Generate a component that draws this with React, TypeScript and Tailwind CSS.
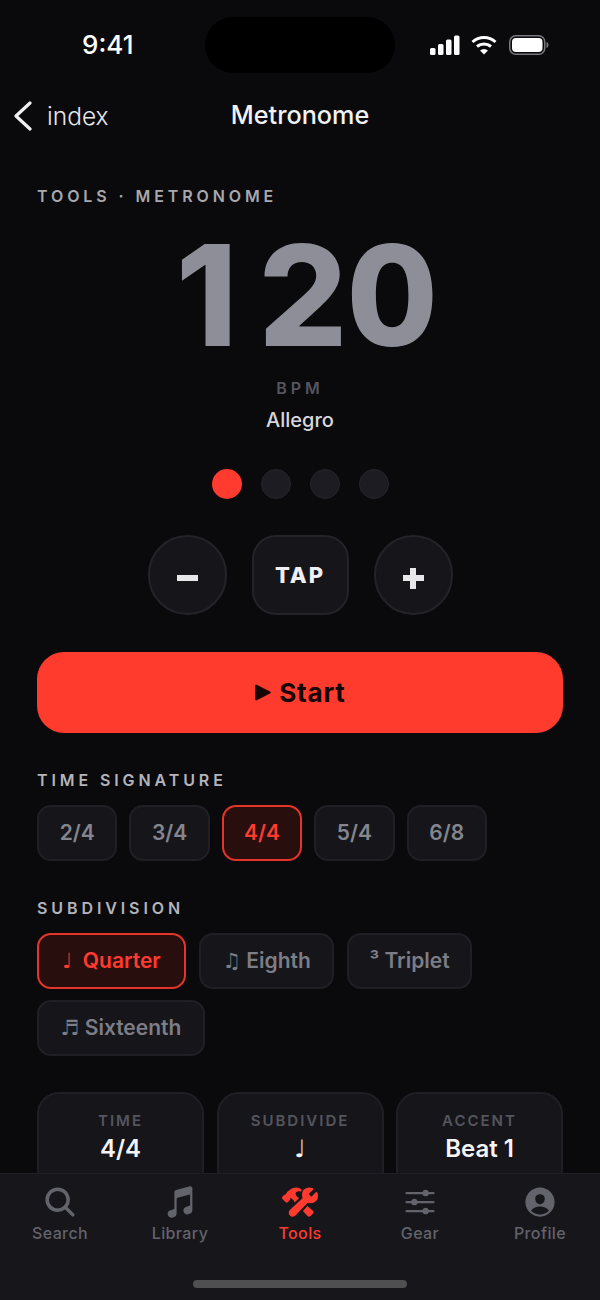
import { IoConstruct, IoMusicalNotes, IoOptions, IoPersonCircle, IoSearch } from "react-icons/io5";

const timeSignatures = ["2/4", "3/4", "4/4", "5/4", "6/8"];
const subdivisions = [
  { label: "♩  Quarter", width: "w-[149px]", active: true },
  { label: "♫ Eighth", width: "w-[135px]", active: false },
  { label: "³ Triplet", width: "w-[125px]", active: false },
  { label: "♬ Sixteenth", width: "w-[168px]", active: false },
];
const stats = [
  { label: "TIME", value: "4/4" },
  { label: "SUBDIVIDE", value: "♩" },
  { label: "ACCENT", value: "Beat 1" },
];
const tabs = [
  { label: "Search", icon: IoSearch, active: false },
  { label: "Library", icon: IoMusicalNotes, active: false },
  { label: "Tools", icon: IoConstruct, active: true },
  { label: "Gear", icon: IoOptions, active: false },
  { label: "Profile", icon: IoPersonCircle, active: false },
];

const StatusIcons = () => (
  <div className="flex items-center gap-[11px]">
    <svg width="30" height="20" viewBox="0 0 30 20" fill="white">
      <rect x="0" y="13" width="5.500" height="7" rx="1.500" />
      <rect x="8" y="9" width="5.500" height="11" rx="1.500" />
      <rect x="16" y="4.500" width="5.500" height="15.500" rx="1.500" />
      <rect x="24" y="0.500" width="5.500" height="19.500" rx="1.500" />
    </svg>
    <svg width="26" height="20" viewBox="0 0 26 20" fill="none" stroke="white" strokeWidth="3">
      <path d="M1.500 7C8 1 18 1 24.500 7" />
      <path d="M6 11.500C10 8 16 8 20 11.500" />
      <path d="M13 19.500L9 15.500C11.500 13.500 14.500 13.500 17 15.500Z" fill="white" stroke="none" />
    </svg>
    <svg width="40" height="20" viewBox="0 0 40 20" fill="none" className="ml-[1px]">
      <rect x="0.750" y="0.750" width="35" height="18.500" rx="6" stroke="#77777c" strokeWidth="1.500" />
      <rect x="3" y="3" width="30.500" height="14" rx="4" fill="white" />
      <path d="M37.500 7V13C39 12.500 39.500 11 39.500 10C39.500 9 39 7.500 37.500 7Z" fill="#77777c" />
    </svg>
  </div>
);

export default function App() {
  return (
    <div className="flex h-[1300px] w-[600px] flex-col overflow-hidden bg-[#0a0a0d] font-['Inter','DejaVu_Sans',sans-serif] text-white">
      <div className="min-h-0 flex-1 overflow-hidden">
        {/* Status bar */}
        <div className="relative flex h-[90px] items-center justify-between pr-[51px] pl-[82px]">
          <span className="text-[26px] font-medium leading-none">9:41</span>
          <div className="absolute top-[17px] left-[205px] h-[56px] w-[190px] rounded-[28px] bg-black" />
          <StatusIcons />
        </div>

        {/* Nav */}
        <div className="relative flex h-[52px] items-center justify-center">
          <div className="absolute top-0 left-[14px] flex h-full items-center gap-[15px] text-[#e8e8ea]">
            <svg width="18" height="30" viewBox="0 0 18 30" fill="none" stroke="#f0f0f2" strokeWidth="3.200" strokeLinecap="round" strokeLinejoin="round">
              <path d="M16 2L2 15L16 28" />
            </svg>
            <span className="text-[24.500px] font-light">index</span>
          </div>
          <span className="text-[25.200px] font-medium text-[#f2f2f4]">Metronome</span>
        </div>

        <div className="px-[37px]">
          <p className="mt-[44px] text-[16px] font-semibold leading-[20px] tracking-[3.900px] text-[#a8a8af]">TOOLS · METRONOME</p>

          {/* Tempo */}
          <div className="flex flex-col items-center">
            <div className="mt-[14px] ml-[12px] text-[140px] font-extrabold leading-[150px] tracking-[-1px] text-[#8e8e98]">
              <span className="tracking-[20px]">1</span>
              <span className="tabular-nums">20</span>
            </div>
            <div className="mt-[8px] text-[16px] font-semibold leading-[20px] tracking-[4px] text-[#55555e]">BPM</div>
            <div className="mt-[10px] text-[20px] font-medium leading-[24px] text-[#d8d8dc]">Allegro</div>
          </div>

          {/* Beat dots */}
          <div className="mt-[37px] flex justify-center gap-[19px]">
            <div className="h-[30px] w-[30px] rounded-full bg-[#ff3b30]" />
            <div className="h-[30px] w-[30px] rounded-full border border-[#25252b] bg-[#1c1c22]" />
            <div className="h-[30px] w-[30px] rounded-full border border-[#25252b] bg-[#1c1c22]" />
            <div className="h-[30px] w-[30px] rounded-full border border-[#25252b] bg-[#1c1c22]" />
          </div>

          {/* Tempo controls */}
          <div className="mt-[36px] flex justify-center gap-[25px]">
            <button className="flex h-[80px] w-[79px] items-center justify-center rounded-full border-2 border-[#232329] bg-[#15151a] pt-[6px]">
              <span className="h-[6px] w-[21px] bg-[#e8e8ea]" />
            </button>
            <button className="h-[80px] w-[97px] rounded-[24px] border-2 border-[#232329] bg-[#15151a] text-[22px] font-extrabold tracking-[2px] text-[#f0f0f2]">TAP</button>
            <button className="relative flex h-[80px] w-[79px] items-center justify-center rounded-full border-2 border-[#232329] bg-[#15151a] pt-[6px]">
              <span className="h-[6px] w-[21px] bg-[#e8e8ea]" />
              <span className="absolute h-[21px] w-[6px] bg-[#e8e8ea]" />
            </button>
          </div>

          {/* Start */}
          <button className="mt-[37px] flex h-[81px] w-[526px] items-center justify-center gap-[8px] rounded-[27px] bg-[#ff3b2e] text-[26px] font-bold tracking-[0.800px] text-[#170404]">
            <svg width="17" height="17" viewBox="0 0 16 16" fill="#170404">
              <path d="M1 2.200C1 1 2 .500 3 1L15 7C16 7.500 16 8.500 15 9L3 15C2 15.500 1 15 1 13.800Z" />
            </svg>
            Start
          </button>

          {/* Time signature */}
          <p className="mt-[37px] text-[16px] font-semibold leading-[20px] tracking-[3.900px] text-[#b4b4ba]">TIME SIGNATURE</p>
          <div className="mt-[15px] flex gap-[12px]">
            {timeSignatures.map((sig) => (
              <div
                key={sig}
                className={
                  sig === "4/4"
                    ? "flex h-[56px] w-[80.400px] items-center justify-center rounded-[14px] border-2 border-[#e5352b] bg-[#280e0d] text-[21px] font-semibold text-[#ff3b30]"
                    : "flex h-[56px] w-[80.400px] items-center justify-center rounded-[14px] border-2 border-[#1f1f25] bg-[#15151a] text-[21px] font-semibold text-[#85858e]"
                }
              >
                {sig}
              </div>
            ))}
          </div>

          {/* Subdivision */}
          <p className="mt-[37px] text-[16px] font-semibold leading-[20px] tracking-[3.900px] text-[#b4b4ba]">SUBDIVISION</p>
          <div className="mt-[15px] flex flex-wrap gap-x-[13px] gap-y-[11px]">
            {subdivisions.map((s) =>
              s.active ? (
                <div key={s.label} className={`flex h-[56px] items-center justify-center rounded-[14px] border-2 border-[#e5352b] bg-[#280e0d] text-[21px] font-semibold whitespace-pre text-[#ff3b30] ${s.width}`}>
                  {s.label}
                </div>
              ) : (
                <div key={s.label} className={`flex h-[56px] items-center justify-center rounded-[14px] border-2 border-[#1f1f25] bg-[#15151a] text-[21px] font-semibold whitespace-pre text-[#7d7d86] ${s.width}`}>
                  {s.label}
                </div>
              ),
            )}
          </div>

          {/* Stats */}
          <div className="mt-[36px] grid grid-cols-3 gap-[12.500px]">
            {stats.map((stat) => (
              <div key={stat.label} className="flex h-[100px] flex-col items-center rounded-[22px] border-2 border-[#1f1f25] bg-[#15151a] pt-[18px]">
                <span className="text-[15px] font-semibold leading-[18px] tracking-[2px] text-[#55555e]">{stat.label}</span>
                <span className="mt-[3px] text-[24px] font-semibold leading-[32px] text-[#f4f4f6]">{stat.value}</span>
              </div>
            ))}
          </div>
        </div>
      </div>

      {/* Tab bar */}
      <div className="relative h-[127px] shrink-0 border-t border-[#1e1e24] bg-[#16161b]">
        <div className="grid grid-cols-5 pt-[10px]">
          {tabs.map(({ label, icon: Icon, active }) => (
            <div key={label} className={active ? "flex flex-col items-center text-[#ff3b30]" : "flex flex-col items-center text-[#63636c]"}>
              <Icon className="h-[36px] w-[36px]" />
              <span className="mt-[3px] text-[16px] font-medium leading-[20px] tracking-[0.400px]">{label}</span>
            </div>
          ))}
        </div>
        <div className="absolute bottom-[12px] left-[193px] h-[8px] w-[214px] rounded-full bg-[#4f4f52]" />
      </div>
    </div>
  );
}
